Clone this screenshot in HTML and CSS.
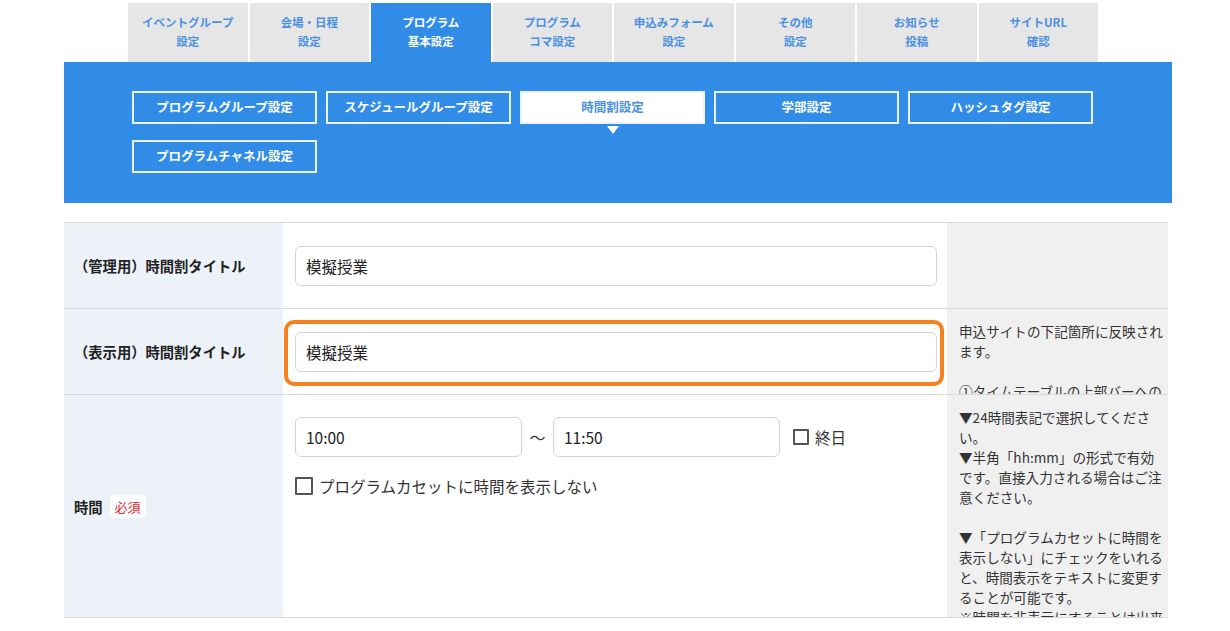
FILE: index.html
```html
<!DOCTYPE html>
<html lang="ja">
<head>
  <meta charset="UTF-8">
  <meta name="viewport" content="width=device-width, initial-scale=1.0">
  <title>時間割設定</title>
  <link rel="stylesheet" href="styles.css">
</head>
<body>
  <div class="page">
    <nav class="tabs">
      <a class="tab">イベントグループ<br>設定</a>
      <a class="tab">会場・日程<br>設定</a>
      <a class="tab active">プログラム<br>基本設定</a>
      <a class="tab">プログラム<br>コマ設定</a>
      <a class="tab">申込みフォーム<br>設定</a>
      <a class="tab">その他<br>設定</a>
      <a class="tab">お知らせ<br>投稿</a>
      <a class="tab">サイトURL<br>確認</a>
    </nav>

    <div class="subnav">
      <div class="subnav-grid">
        <a class="sub-btn">プログラムグループ設定</a>
        <a class="sub-btn">スケジュールグループ設定</a>
        <a class="sub-btn active">時間割設定</a>
        <a class="sub-btn">学部設定</a>
        <a class="sub-btn">ハッシュタグ設定</a>
        <a class="sub-btn">プログラムチャネル設定</a>
      </div>
    </div>

    <div class="form">
      <div class="row row-short">
        <div class="label">（管理用）時間割タイトル</div>
        <div class="field">
          <input class="text-input" type="text" value="模擬授業">
        </div>
        <div class="help"></div>
      </div>

      <div class="row row-short">
        <div class="label">（表示用）時間割タイトル</div>
        <div class="field">
          <input class="text-input" type="text" value="模擬授業">
          <div class="highlight"></div>
        </div>
        <div class="help">
          <p>申込サイトの下記箇所に反映されます。</p>
          <p class="gap">①タイムテーブルの上部バーへの表示</p>
        </div>
      </div>

      <div class="row row-tall">
        <div class="label">時間 <span class="required">必須</span></div>
        <div class="field field-top">
          <div class="time-line">
            <input class="text-input time-input" type="text" value="10:00">
            <span class="tilde">〜</span>
            <input class="text-input time-input" type="text" value="11:50">
            <label class="check"><span class="box"></span>終日</label>
          </div>
          <label class="check check-wide"><span class="box"></span>プログラムカセットに時間を表示しない</label>
        </div>
        <div class="help">
          <p>▼24時間表記で選択してください。</p>
          <p>▼半角「hh:mm」の形式で有効です。直接入力される場合はご注意ください。</p>
          <p class="gap">▼「プログラムカセットに時間を表示しない」にチェックをいれると、時間表示をテキストに変更することが可能です。</p>
          <p>※時間を非表示にすることは出来ません。</p>
        </div>
      </div>
    </div>
  </div>
</body>
</html>
```

FILE: styles.css
```css
body {
  margin: 0;
  font-family: "Noto Sans CJK JP", "Noto Sans", sans-serif;
  color: #222;
  background-color: #fff;
}
.page {
  margin-left: 64px;
  width: 1108px;
}

/* main tabs */
.tabs {
  display: grid;
  grid-template-columns: repeat(8, 119.5px);
  gap: 2px;
  margin: 3px 0 0 64px;
}
.tab {
  height: 59px;
  display: flex;
  align-items: center;
  justify-content: center;
  text-align: center;
  background-color: #e6e6e6;
  color: #4b91e2;
  font-size: 11.5px;
  font-weight: 700;
  line-height: 19px;
  padding-bottom: 1px;
  box-sizing: border-box;
}
.tab.active {
  background-color: #318ce7;
  color: #fff;
}

/* sub navigation */
.subnav {
  background-color: #318ce7;
  height: 141px;
  padding: 29px 0 0 68px;
  box-sizing: border-box;
}
.subnav-grid {
  display: grid;
  grid-template-columns: repeat(5, 185px);
  column-gap: 9px;
  row-gap: 16px;
}
.sub-btn {
  position: relative;
  height: 33px;
  display: flex;
  align-items: center;
  justify-content: center;
  border: 2px solid #e9f2fd;
  box-sizing: border-box;
  padding-bottom: 3px;
  color: #fff;
  font-size: 12.5px;
  font-weight: 700;
}
.sub-btn.active {
  background-color: #fff;
  color: #4b91e2;
}
.sub-btn.active::after {
  content: "";
  position: absolute;
  left: 50%;
  top: 33px;
  margin-left: -6px;
  border-left: 6px solid transparent;
  border-right: 6px solid transparent;
  border-top: 8px solid #fff;
}

/* form table */
.form {
  margin-top: 19px;
  width: 1104px;
  border-top: 1px solid #d9d9d9;
}
.row {
  display: grid;
  grid-template-columns: 219px 664px 221px;
  border-bottom: 1px solid #d9d9d9;
}
.row-short {
  height: 85px;
}
.row-tall {
  height: 222px;
}
.label {
  background-color: #edf1f8;
  display: flex;
  align-items: center;
  padding-left: 10px;
  font-size: 14.3px;
  font-weight: 700;
  color: #222;
}
.required {
  margin-left: 7px;
  padding: 2px 5px;
  background-color: #fff;
  color: #e8252d;
  font-size: 13px;
  font-weight: 400;
  border-radius: 2px;
}
.field {
  position: relative;
  display: flex;
  align-items: center;
  padding: 0 10px 0 12px;
}
.field-top {
  flex-direction: column;
  align-items: flex-start;
  padding-top: 22px;
}
.text-input {
  width: 100%;
  height: 40px;
  box-sizing: border-box;
  border: 1px solid #d4d4d4;
  border-radius: 6px;
  padding: 0 10px;
  font-family: "Noto Sans CJK JP", "Noto Sans", sans-serif;
  font-size: 15.5px;
  color: #222;
  background-color: #fff;
}
.highlight {
  position: absolute;
  left: 1px;
  top: 11px;
  right: 3px;
  bottom: 8px;
  border: 4px solid #f6821f;
  border-radius: 10px;
}
.time-line {
  display: flex;
  align-items: center;
}
.time-input {
  width: 227px;
}
.tilde {
  width: 31px;
  text-align: center;
  font-size: 16px;
  color: #333;
}
.check {
  display: flex;
  align-items: center;
  margin-left: 13px;
  font-size: 15.5px;
  color: #333;
}
.box {
  width: 16px;
  height: 16px;
  border: 2px solid #555;
  box-sizing: border-box;
  border-radius: 1px;
  margin-right: 6px;
}
.check-wide {
  margin: 18px 0 0 0;
}
.check-wide .box {
  width: 18px;
  height: 18px;
}
.help {
  background-color: #f0f0f0;
  padding: 12px 4px 0 12px;
  overflow: hidden;
  font-size: 13.6px;
  line-height: 20px;
  color: #333;
}
.help p {
  margin: 0;
}
.help p.gap {
  margin-top: 20px;
}
```
